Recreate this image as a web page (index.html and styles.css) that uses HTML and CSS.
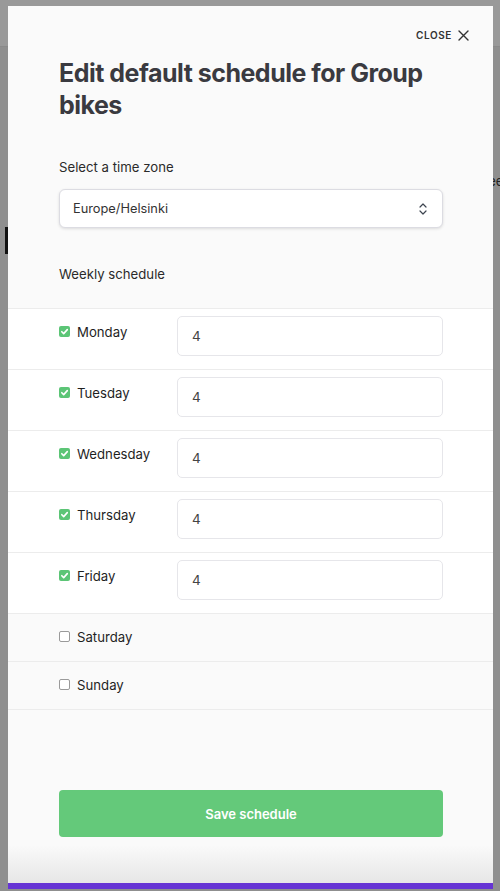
FILE: index.html
```html
<!DOCTYPE html>
<html>
<head>
<meta charset="utf-8">
<link rel="stylesheet" href="styles.css">
</head>
<body>
<div class="page">
  <div class="page-header"></div>
  <div class="page-body">
    <div class="page-mark"></div>
    <div class="page-week">Week</div>
  </div>
</div>
<div class="modal">
  <div class="close-row">
    <button class="close">CLOSE
      <svg width="11" height="11" viewBox="0 0 11 11"><path d="M1 1L10 10M10 1L1 10" stroke="#333" stroke-width="1.4" fill="none" stroke-linecap="round"/></svg>
    </button>
  </div>
  <h1 class="title">Edit default schedule for Group bikes</h1>
  <div class="field-label">Select a time zone</div>
  <div class="select">
    <span>Europe/Helsinki</span>
    <svg width="10" height="16" viewBox="0 0 10 16"><path d="M2 6L5 3L8 6M2 10L5 13L8 10" stroke="#3d4450" stroke-width="1.2" fill="none" stroke-linecap="round" stroke-linejoin="round"/></svg>
  </div>
  <div class="field-label weekly">Weekly schedule</div>
  <div class="days">
    <div class="day on">
      <label class="day-label"><span class="cb on"><svg width="11" height="11" viewBox="0 0 11 11"><path d="M2.8 5.7L4.7 7.6L8.3 3.6" stroke="#fff" stroke-width="1.6" fill="none" stroke-linecap="round" stroke-linejoin="round"/></svg></span>Monday</label>
      <div class="input">4</div>
    </div>
    <div class="day on">
      <label class="day-label"><span class="cb on"><svg width="11" height="11" viewBox="0 0 11 11"><path d="M2.8 5.7L4.7 7.6L8.3 3.6" stroke="#fff" stroke-width="1.6" fill="none" stroke-linecap="round" stroke-linejoin="round"/></svg></span>Tuesday</label>
      <div class="input">4</div>
    </div>
    <div class="day on">
      <label class="day-label"><span class="cb on"><svg width="11" height="11" viewBox="0 0 11 11"><path d="M2.8 5.7L4.7 7.6L8.3 3.6" stroke="#fff" stroke-width="1.6" fill="none" stroke-linecap="round" stroke-linejoin="round"/></svg></span>Wednesday</label>
      <div class="input">4</div>
    </div>
    <div class="day on">
      <label class="day-label"><span class="cb on"><svg width="11" height="11" viewBox="0 0 11 11"><path d="M2.8 5.7L4.7 7.6L8.3 3.6" stroke="#fff" stroke-width="1.6" fill="none" stroke-linecap="round" stroke-linejoin="round"/></svg></span>Thursday</label>
      <div class="input">4</div>
    </div>
    <div class="day on">
      <label class="day-label"><span class="cb on"><svg width="11" height="11" viewBox="0 0 11 11"><path d="M2.8 5.7L4.7 7.6L8.3 3.6" stroke="#fff" stroke-width="1.6" fill="none" stroke-linecap="round" stroke-linejoin="round"/></svg></span>Friday</label>
      <div class="input">4</div>
    </div>
    <div class="day off">
      <label class="day-label"><span class="cb"></span>Saturday</label>
    </div>
    <div class="day off">
      <label class="day-label"><span class="cb"></span>Sunday</label>
    </div>
  </div>
  <button class="save">Save schedule</button>
  <div class="modal-foot"></div>
</div>
</body>
</html>
```
FILE: styles.css
```css
* { box-sizing: border-box; }
html, body { margin: 0; padding: 0; }
body {
  width: 500px;
  height: 891px;
  overflow: hidden;
  background: #8f8f8f;
  font-family: Inter, "Noto Sans", sans-serif;
  position: relative;
}
.page-header {
  height: 47px;
  background: #999999;
  border-bottom: 1px solid #8a8a8a;
}
.page-body {
  position: relative;
  height: 843px;
  padding-top: 180px;
}
.page-mark {
  margin-left: 5px;
  width: 4px;
  height: 27px;
  background: #111;
}
.page-week {
  position: absolute;
  left: 476px;
  top: 126px;
  font-size: 13px;
  color: #222;
}
.modal {
  position: absolute;
  left: 8px;
  top: 6px;
  width: 485px;
  height: 883px;
  background: #fafafa;
  display: flex;
  flex-direction: column;
  padding-top: 19px;
}
.close-row {
  display: flex;
  justify-content: flex-end;
  padding-right: 24px;
  height: 20px;
}
.close {
  border: 0;
  background: none;
  padding: 0;
  font-family: Inter, sans-serif;
  font-size: 10px;
  font-weight: 600;
  letter-spacing: 0.6px;
  color: #333;
  display: flex;
  align-items: center;
  gap: 6px;
}
.title {
  margin: 12px 50px 0 51px;
  font-size: 25px;
  line-height: 32px;
  font-weight: 700;
  color: #3a3a40;
  letter-spacing: -0.5px;
}
.field-label {
  margin: 36px 0 0 51px;
  font-size: 13.2px;
  line-height: 20px;
  color: #2a2a2a;
}
.select {
  margin: 12px 50px 0 51px;
  height: 39px;
  background: #fff;
  border: 1px solid #dcdce2;
  border-radius: 6px;
  box-shadow: 0 1px 3px rgba(0,0,0,0.12);
  display: flex;
  align-items: center;
  justify-content: space-between;
  padding: 0 14px 0 13px;
  font-size: 12.8px;
  color: #333;
}
.weekly { margin-top: 36px; }
.days {
  margin-top: 24px;
  border-bottom: 1px solid #ececec;
}
.day {
  border-top: 1px solid #ececec;
  display: flex;
  align-items: flex-start;
  padding-left: 51px;
  padding-right: 50px;
}
.day.on {
  background: #fff;
  height: 61px;
  padding-top: 7px;
}
.day.off {
  background: #fafafa;
  height: 48px;
  padding-top: 13px;
}
.day-label {
  width: 118px;
  display: flex;
  align-items: center;
  gap: 7px;
  font-size: 13.2px;
  line-height: 20px;
  color: #1f1f1f;
}
.day.on .day-label { padding-top: 6px; }
.cb {
  width: 11px;
  height: 11px;
  border-radius: 2px;
  border: 1px solid #9a9a9a;
  background: #fff;
  display: flex;
  flex-shrink: 0;
  margin-top: -1px;
}
.cb.on {
  background: #5cc576;
  border: 0;
}
.input {
  flex: 1;
  height: 40px;
  background: #fff;
  border: 1px solid #e6e6ea;
  border-radius: 5px;
  display: flex;
  align-items: center;
  padding-left: 14px;
  font-size: 13.5px;
  color: #444;
}
.save {
  margin: 80px 50px 0 51px;
  height: 47px;
  border: 0;
  border-radius: 4px;
  background: #64c97a;
  color: #fff;
  font-family: Inter, sans-serif;
  font-size: 13px;
  font-weight: 600;
}
.modal-foot {
  margin-top: auto;
  height: 44px;
  background: linear-gradient(#fafafa, #e6e6e6);
  border-bottom: 6px solid #6634d4;
}
```
